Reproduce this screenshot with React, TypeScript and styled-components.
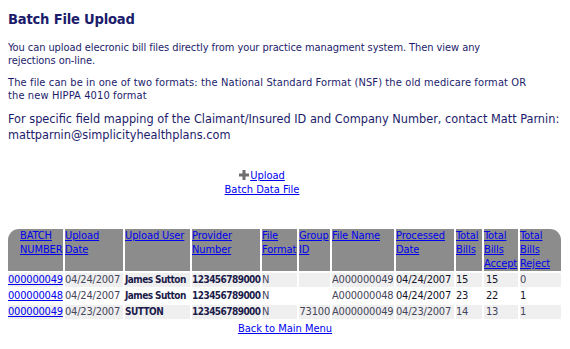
import React from "react";
import styled, { createGlobalStyle } from "styled-components";

const GlobalStyle = createGlobalStyle`
  body {
    margin: 0;
    background: #fff;
    font-family: "DejaVu Sans Condensed", "DejaVu Sans", Verdana, sans-serif;
  }
`;

const Page = styled.div`
  padding: 8px 8px 0 8px;
  color: #1c1c6b;
`;

const Title = styled.h1`
  font-size: 14.6px;
  font-weight: bold;
  letter-spacing: -0.2px;
  margin: 1px 0 12px 0;
  line-height: 20px;
`;

const Paragraph = styled.p<{ $large?: boolean; $spacing?: number; $width?: number }>`
  max-width: ${(p) => (p.$width ? `${p.$width}px` : "none")};
  font-size: ${(p) => (p.$large ? "12.6px" : "11px")};
  line-height: ${(p) => (p.$large ? "16px" : "13px")};
  letter-spacing: ${(p) => p.$spacing || 0}px;
  font-weight: normal;
  margin: 0 0 ${(p) => (p.$large ? "26px" : "9px")} 0;
`;

const UploadBox = styled.div`
  width: 508px;
  text-align: center;
  font-size: 11px;
  line-height: 14px;
  margin-bottom: 31px;
`;

const Link = styled.a`
  color: #0000ee;
  text-decoration: underline;
`;

const PlusIcon = styled.svg`
  width: 10px;
  height: 10px;
  vertical-align: -1px;
  margin-right: 1px;
`;

const Table = styled.table`
  border-collapse: separate;
  border-spacing: 2px;
  table-layout: fixed;
  width: 557px;
  margin-left: -2px;
  margin-top: -1px;
  font-size: 11px;
`;

const HeadCell = styled.th<{ $corner?: "left" | "right"; $w: number }>`
  width: ${(p) => p.$w}px;
  background: #8c8c8c;
  text-align: left;
  vertical-align: top;
  font-weight: normal;
  padding: 0;
  height: 41px;
  line-height: 14px;
  letter-spacing: -0.1px;
  padding-left: ${(p) => (p.$corner === "left" ? "12px" : "0")};
  border-top-left-radius: ${(p) => (p.$corner === "left" ? "11px" : "0")};
  border-top-right-radius: ${(p) => (p.$corner === "right" ? "11px" : "0")};
`;

const Row = styled.tr<{ $shaded?: boolean }>`
  background: ${(p) => (p.$shaded ? "#efefef" : "#fff")};
`;

const Cell = styled.td<{ $bold?: boolean; $tone?: string; $align?: string; $indent?: number }>`
  padding: 0 0 0 ${(p) => p.$indent || 0}px;
  height: 14px;
  line-height: 14px;
  white-space: nowrap;
  font-size: ${(p) => (p.$bold ? "10px" : "11px")};
  letter-spacing: ${(p) => (p.$bold ? "-0.55px" : "-0.2px")};
  font-weight: ${(p) => (p.$bold ? "bold" : "normal")};
  color: ${(p) => p.$tone || "#45455a"};
  text-align: ${(p) => p.$align || "left"};
`;

const Footer = styled.div`
  text-align: center;
  font-size: 11px;
  margin-top: 1px;
`;

const headers: [string, number, ("left" | "right")?][] = [
  ["BATCH NUMBER", 43, "left"],
  ["Upload Date", 58],
  ["Upload User", 65],
  ["Provider Number", 68],
  ["File Format", 35],
  ["Group ID", 31],
  ["File Name", 62],
  ["Processed Date", 58],
  ["Total Bills", 26],
  ["Total Bills Accept", 34],
  ["Total Bills Reject", 41, "right"],
];

const rows = [
  { batch: "000000049", date: "04/24/2007", user: "James Sutton", provider: "123456789000", format: "N", group: "", file: "A000000049", processed: "04/24/2007", total: "15", accept: "15", reject: "0", strong: true },
  { batch: "000000048", date: "04/24/2007", user: "James Sutton", provider: "123456789000", format: "N", group: "", file: "A000000048", processed: "04/24/2007", total: "23", accept: "22", reject: "1", strong: true },
  { batch: "000000049", date: "04/23/2007", user: "SUTTON", provider: "123456789000", format: "N", group: "73100", file: "A000000049", processed: "04/23/2007", total: "14", accept: "13", reject: "1", strong: false },
];

export default function App() {
  return (
    <>
      <GlobalStyle />
      <Page>
        <Title>Batch File Upload</Title>
        <Paragraph $spacing={-0.07} $width={514}>
          You can upload elecronic bill files directly from your practice managment system. Then view any
          rejections on-line.
        </Paragraph>
        <Paragraph $spacing={0.12} $width={526}>
          The file can be in one of two formats: the National Standard Format (NSF) the old medicare format OR
          the new HIPPA 4010 format
        </Paragraph>
        <Paragraph $large>
          For specific field mapping of the Claimant/Insured ID and Company Number, contact Matt Parnin:
          mattparnin@simplicityhealthplans.com
        </Paragraph>
        <UploadBox>
          <PlusIcon viewBox="0 0 10 10">
            <path d="M3.5 0h3v3.5H10v3H6.5V10h-3V6.5H0v-3h3.5z" fill="#6e6e6e" />
          </PlusIcon>
          <Link href="#">Upload</Link>
          <br />
          <Link href="#">Batch Data File</Link>
        </UploadBox>
        <Table>
          <thead>
            <tr>
              {headers.map(([label, w, corner]) => (
                <HeadCell key={label} $w={w} $corner={corner}>
                  <Link href="#">{label}</Link>
                </HeadCell>
              ))}
            </tr>
          </thead>
          <tbody>
            {rows.map((r, i) => {
              const strongTone = r.strong ? "#15152a" : undefined;
              return (
                <Row key={i} $shaded={i !== 1}>
                  <Cell>
                    <Link href="#">{r.batch}</Link>
                  </Cell>
                  <Cell>{r.date}</Cell>
                  <Cell $bold $tone="#1c1c4b">{r.user}</Cell>
                  <Cell $bold $tone="#1c1c4b">{r.provider}</Cell>
                  <Cell>{r.format}</Cell>
                  <Cell $align="right">{r.group}</Cell>
                  <Cell>{r.file}</Cell>
                  <Cell $tone={strongTone}>{r.processed}</Cell>
                  <Cell $tone={strongTone}>{r.total}</Cell>
                  <Cell $tone={strongTone} $indent={2}>{r.accept}</Cell>
                  <Cell $tone={r.strong && r.reject !== "0" ? "#15152a" : undefined}>{r.reject}</Cell>
                </Row>
              );
            })}
          </tbody>
        </Table>
        <Footer>
          <Link href="#">Back to Main Menu</Link>
        </Footer>
      </Page>
    </>
  );
}
